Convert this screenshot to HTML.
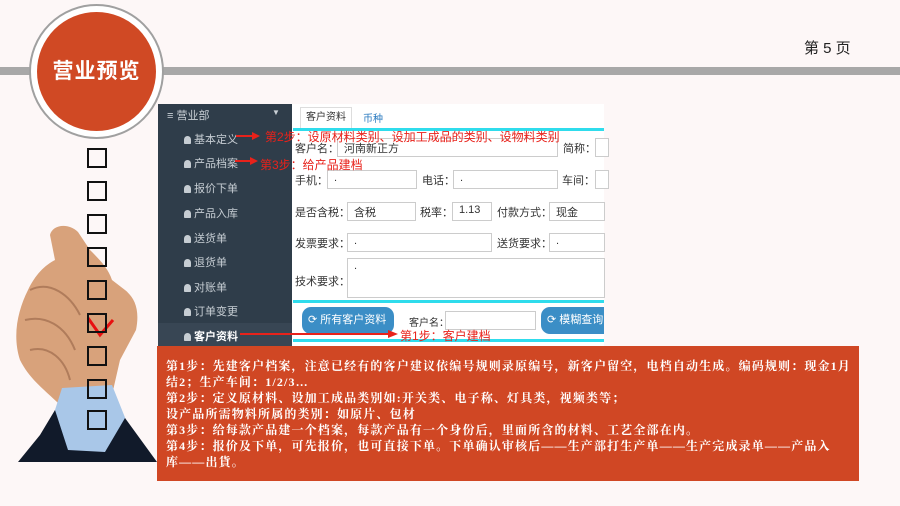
<!DOCTYPE html>
<html><head><meta charset="utf-8"><style>
*{margin:0;padding:0;box-sizing:border-box}
body{width:900px;height:506px;background:#fdf7f7;position:relative;overflow:hidden;font-family:"Liberation Sans","Noto Sans CJK SC",sans-serif}
.a{position:absolute}
.cb{position:absolute;left:87px;width:20px;height:20px;border:2px solid #111}
.sb{position:absolute;left:158px;top:104px;width:134px;height:242px;background:#2f3d4a;color:#c9d0d6;font-size:11px}
.it{position:absolute;left:26px;font-size:11px;color:#c6cdd3}
.it:before{content:"";display:inline-block;width:7px;height:8px;background:#c6cdd3;border-radius:4px 4px 1px 1px;margin-right:3px;vertical-align:-1px}
.lb{position:absolute;font-size:11px;color:#333}
.in{position:absolute;border:1px solid #ccc;background:#fff;font-size:11px;color:#333;padding:1px 6px;height:19px}
.cy{position:absolute;left:293px;width:311px;height:3px;background:#2fdcec}
.red{position:absolute;color:#e8221b;font-size:12px}
.btn{position:absolute;background:#3b8ec6;color:#fff;font-size:11px;border-radius:9px;height:27px;line-height:27px;padding-left:6px}
.tx{white-space:nowrap}
</style></head><body>
<div class="a" style="left:0;top:67px;width:900px;height:8px;background:#a8a8a8"></div>
<div class="a" style="left:29px;top:4px;width:135px;height:135px;border-radius:50%;background:#fff;border:2px solid #a0a0a0"></div>
<div class="a" style="left:37px;top:12px;width:119px;height:119px;border-radius:50%;background:#d04924;color:#fff;font-size:21px;font-weight:bold;text-align:center;line-height:119px;letter-spacing:1px">营业预览</div>
<div class="a" style="left:804px;top:37px;font-size:15px;color:#222">第 5 页</div>

<svg class="a" style="left:0;top:220px" width="160" height="250">
<path d="M50 15 C52 5 68 2 78 12 L90 30 C100 40 108 48 112 60 L125 70 C135 78 140 90 136 110 L120 140 L112 175 L60 185 C45 170 30 160 20 140 C12 115 18 90 28 70 C35 55 45 45 55 40 Z" fill="#d8a27b"/>
<path d="M30 70 C50 60 70 75 80 95 M25 100 C45 95 65 105 75 130 M30 130 C50 125 65 140 70 160" stroke="#b07c5b" stroke-width="2" fill="none"/>
<path d="M55 190 L62 168 L112 165 L128 205 L110 235 L65 235 Z" fill="#a9c7e8"/>
<path d="M18 242 L40 215 L55 190 L68 230 L105 232 L125 198 L157 242 Z" fill="#111a2a"/>
<path d="M88 98 L100 115 L113 100" stroke="#e81010" stroke-width="3" fill="none"/>
</svg>
<div class="cb" style="top:148px"></div><div class="cb" style="top:181px"></div><div class="cb" style="top:214px"></div><div class="cb" style="top:247px"></div><div class="cb" style="top:280px"></div><div class="cb" style="top:313px"></div><div class="cb" style="top:346px"></div><div class="cb" style="top:379px"></div><div class="cb" style="top:410px"></div>

<div class="sb">
<div class="a" style="left:9px;top:3px">≡ 营业部</div>
<div class="a" style="left:114px;top:4px;font-size:8px">▼</div>
<div class="it" style="top:27px">基本定义</div>
<div class="it" style="top:51px">产品档案</div>
<div class="it" style="top:76px">报价下单</div>
<div class="it" style="top:101px">产品入库</div>
<div class="it" style="top:126px">送货单</div>
<div class="it" style="top:150px">退货单</div>
<div class="it" style="top:175px">对账单</div>
<div class="it" style="top:199px">订单变更</div>
<div class="a" style="left:0;top:219px;width:134px;height:23px;background:#384654"></div>
<div class="it" style="top:224px;color:#fff;font-weight:bold">客户资料</div>
</div>

<div class="a" style="left:292px;top:104px;width:312px;height:242px;background:#fff"></div>
<div class="a" style="left:300px;top:107px;width:52px;height:22px;border:1px solid #ddd;border-bottom:none;font-size:10px;color:#333;text-align:center;line-height:20px">客户资料</div>
<div class="a" style="left:363px;top:110px;font-size:10px;color:#2b7bc0">币种</div>
<div class="cy" style="top:128px"></div>
<div class="lb" style="left:295px;top:140px">客户名：</div><div class="in" style="left:337px;top:138px;width:221px">河南新正方</div>
<div class="lb" style="left:563px;top:140px">简称：</div><div class="in" style="left:595px;top:138px;width:10px"></div>
<div class="lb" style="left:295px;top:172px">手机：</div><div class="in" style="left:327px;top:170px;width:90px">.</div>
<div class="lb" style="left:422px;top:172px">电话：</div><div class="in" style="left:453px;top:170px;width:105px">.</div>
<div class="lb" style="left:562px;top:172px">车间：</div><div class="in" style="left:595px;top:170px;width:10px"></div>
<div class="lb" style="left:295px;top:204px">是否含税：</div><div class="in" style="left:347px;top:202px;width:69px">含税</div>
<div class="lb" style="left:420px;top:204px">税率：</div><div class="in" style="left:452px;top:202px;width:40px">1.13</div>
<div class="lb" style="left:497px;top:204px">付款方式：</div><div class="in" style="left:549px;top:202px;width:56px">现金</div>
<div class="lb" style="left:295px;top:235px">发票要求：</div><div class="in" style="left:347px;top:233px;width:145px">.</div>
<div class="lb" style="left:497px;top:235px">送货要求：</div><div class="in" style="left:549px;top:233px;width:56px">.</div>
<div class="lb" style="left:295px;top:273px">技术要求：</div><div class="in" style="left:347px;top:258px;width:258px;height:40px">.</div>
<div class="cy" style="top:300px"></div>
<div class="btn" style="left:302px;top:307px;width:92px">⟳ 所有客户资料</div>
<div class="lb" style="left:409px;top:314px;font-size:10px">客户名：</div><div class="in" style="left:445px;top:311px;width:91px"></div>
<div class="btn" style="left:541px;top:307px;width:63px;border-radius:9px 0 0 9px">⟳ 模糊查询</div>
<div class="cy" style="top:339px"></div>

<div class="red" style="left:265px;top:128px">第2步：设原材料类别、设加工成品的类别、设物料类别</div>
<div class="red" style="left:260px;top:156px">第3步：给产品建档</div>
<div class="red" style="left:400px;top:327px">第1步：客户建档</div>
<svg class="a" style="left:230px;top:125px" width="180" height="220">
<path d="M6 11 L24 11" stroke="#e8221b" stroke-width="2"/><path d="M22 7 L30 11 L22 15Z" fill="#e8221b"/>
<path d="M5 36 L22 36" stroke="#e8221b" stroke-width="2"/><path d="M20 32 L28 36 L20 40Z" fill="#e8221b"/>
<path d="M10 209 L160 209" stroke="#e8221b" stroke-width="2"/><path d="M158 205 L168 209 L158 213Z" fill="#e8221b"/>
</svg>

<div class="a" style="left:157px;top:346px;width:702px;height:135px;background:#d04724;color:#fff;font-family:'Liberation Serif','Noto Serif CJK SC',serif;font-weight:bold;font-size:12px;letter-spacing:1.15px;line-height:16px;padding:12px 0 0 9px;overflow:hidden">
<div class="tx">第1步：先建客户档案，注意已经有的客户建议依编号规则录原编号，新客户留空，电档自动生成。编码规则：现金1月</div>
<div class="tx">结2；生产车间：1/2/3…</div>
<div class="tx">第2步：定义原材料、设加工成品类别如:开关类、电子称、灯具类，视频类等；</div>
<div class="tx">设产品所需物料所属的类别：如原片、包材</div>
<div class="tx">第3步：给每款产品建一个档案，每款产品有一个身份后，里面所含的材料、工艺全部在内。</div>
<div class="tx">第4步：报价及下单，可先报价，也可直接下单。下单确认审核后——生产部打生产单——生产完成录单——产品入</div>
<div class="tx">库——出貨。</div>
</div>
</body></html>
